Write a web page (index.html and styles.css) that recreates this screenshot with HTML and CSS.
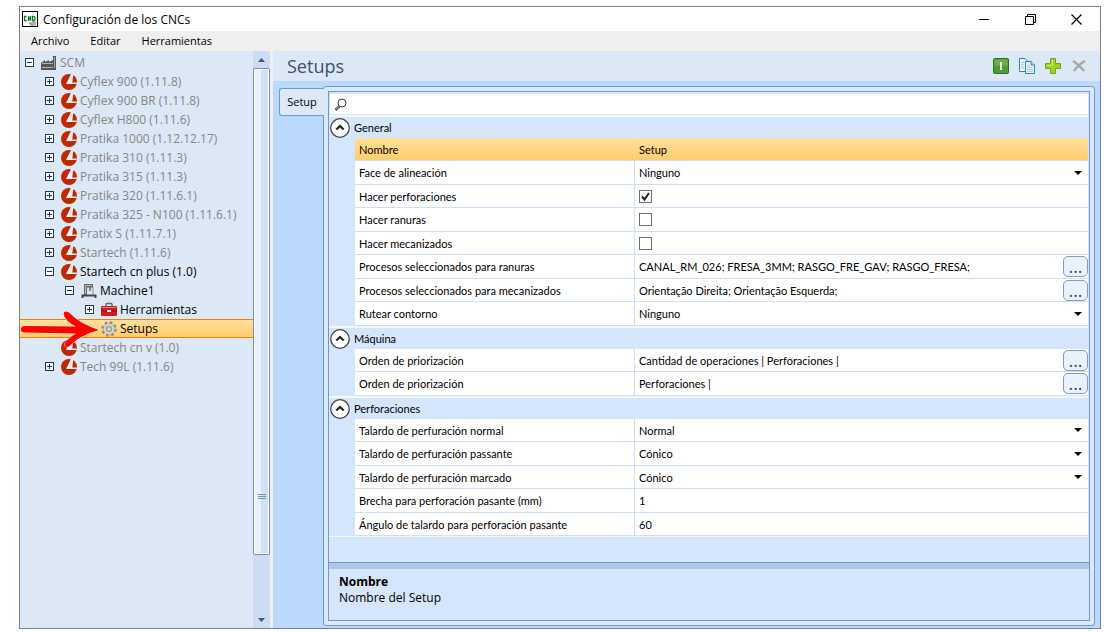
FILE: index.html
```html
<!DOCTYPE html>
<html lang="es">
<head>
    <meta charset="UTF-8">
    <meta name="viewport" content="width=device-width, initial-scale=1.0">
    <title>Configuración de los CNCs</title>
    <link rel="stylesheet" href="styles.css">
</head>
<body>
    <!-- shared icons -->
    <svg class="sprite" aria-hidden="true">
        <symbol id="brand" viewBox="0 0 16 16">
            <circle cx="8" cy="8" r="8" fill="#bd2a00"/>
            <path d="M10 0 L5 10 H15.700 L15.900 8.600 H11.300 L12.300 0 Z" fill="#e9eff8"/>
        </symbol>
        <symbol id="up" viewBox="0 0 19 19">
            <circle cx="9.5" cy="9.5" r="8.8" fill="#fff" stroke="#444" stroke-width="1.2"/>
            <path d="M6 11 L9.5 7.5 L13 11" fill="none" stroke="#222" stroke-width="2"/>
        </symbol>
    </svg>

    <div class="window">
        <header class="titlebar">
            <svg class="app-icon" width="16" height="16" viewBox="0 0 16 16">
                <rect x=".5" y=".5" width="15" height="15" fill="#fff" stroke="#000"/>
                <path d="M4.500 5.500 H2.500 V9.500 H4.500 M6.500 10 V5.500 L8.500 9.500 V5 M10.500 5.500 H12 L13 6.500 V8.500 L12 9.500 H10.500 Z" fill="none" stroke="#0b7a1d" stroke-width="1.3"/>
                <path d="M7 12 h2 v2 h2 v-3 h2 v3 h1" fill="none" stroke="#999" stroke-width="1.5"/>
            </svg>
            <h1>Configuración de los CNCs</h1>
            <div class="window-buttons">
                <button aria-label="Minimizar"><svg width="11" height="11"><path d="M0 5.5 H10" stroke="#000"/></svg></button>
                <button aria-label="Restaurar"><svg width="11" height="11"><path d="M.5 2.5 H8.5 V10.5 H.5 Z M2.5 2.5 V.5 H10.5 V8.5 H8.5" fill="none" stroke="#000"/></svg></button>
                <button aria-label="Cerrar"><svg width="11" height="11"><path d="M.5 .5 L10.5 10.5 M10.5 .5 L.5 10.5" stroke="#000" stroke-width="1.2"/></svg></button>
            </div>
        </header>

        <nav class="menubar">
            <button>Archivo</button>
            <button>Editar</button>
            <button>Herramientas</button>
        </nav>

        <div class="content">
            <aside class="sidebar">
                <ul class="tree">
                    <li class="node level-0"><button class="toggle open" aria-label="Contraer"></button>
                        <svg class="icon" viewBox="0 0 16 16"><path d="M0 8 L4 5 V7 L8 5 V7 L12 5 V1 H15 V15 H0 Z" fill="#555"/><path d="M1 8.500 H12 M1 12.500 H12" stroke="#b5b5b5"/><path d="M13.500 2 V13" stroke="#aaa"/></svg>SCM</li>
                    <li class="node level-1"><button class="toggle" aria-label="Expandir"></button><svg class="icon"><use href="#brand"/></svg>Cyflex 900 (1.11.8)</li>
                    <li class="node level-1"><button class="toggle" aria-label="Expandir"></button><svg class="icon"><use href="#brand"/></svg>Cyflex 900 BR (1.11.8)</li>
                    <li class="node level-1"><button class="toggle" aria-label="Expandir"></button><svg class="icon"><use href="#brand"/></svg>Cyflex H800 (1.11.6)</li>
                    <li class="node level-1"><button class="toggle" aria-label="Expandir"></button><svg class="icon"><use href="#brand"/></svg>Pratika 1000 (1.12.12.17)</li>
                    <li class="node level-1"><button class="toggle" aria-label="Expandir"></button><svg class="icon"><use href="#brand"/></svg>Pratika 310 (1.11.3)</li>
                    <li class="node level-1"><button class="toggle" aria-label="Expandir"></button><svg class="icon"><use href="#brand"/></svg>Pratika 315 (1.11.3)</li>
                    <li class="node level-1"><button class="toggle" aria-label="Expandir"></button><svg class="icon"><use href="#brand"/></svg>Pratika 320 (1.11.6.1)</li>
                    <li class="node level-1"><button class="toggle" aria-label="Expandir"></button><svg class="icon"><use href="#brand"/></svg>Pratika 325 - N100 (1.11.6.1)</li>
                    <li class="node level-1"><button class="toggle" aria-label="Expandir"></button><svg class="icon"><use href="#brand"/></svg>Pratix S (1.11.7.1)</li>
                    <li class="node level-1"><button class="toggle" aria-label="Expandir"></button><svg class="icon"><use href="#brand"/></svg>Startech (1.11.6)</li>
                    <li class="node level-1 active"><button class="toggle open" aria-label="Contraer"></button><svg class="icon"><use href="#brand"/></svg>Startech cn plus (1.0)</li>
                    <li class="node level-2 active"><button class="toggle open" aria-label="Contraer"></button>
                        <svg class="icon" viewBox="0 0 16 16"><path d="M3 1 H12 V4.500 H6 V12 H3 Z" fill="#666"/><path d="M4.500 11 V2.500 H11" fill="none" stroke="#bbb"/><path d="M9 4 V8" stroke="#666" stroke-width="1.500"/><path d="M12 4 V12" stroke="#888"/><path d="M1.500 15 V12.500 H14.500 V15" fill="none" stroke="#444" stroke-width="2"/></svg>Machine1</li>
                    <li class="node level-3 active"><button class="toggle" aria-label="Expandir"></button>
                        <svg class="icon" viewBox="0 0 16 16"><path d="M5 4.5 V2.5 Q5 1.5 6 1.5 H10 Q11 1.5 11 2.5 V4.5" fill="none" stroke="#666" stroke-width="1.4"/><rect x="0" y="4" width="16" height="10" rx="1" fill="#c91f1f"/><path d="M1 5.5 H15" stroke="#ee7c70"/><path d="M0 9 H16" stroke="#8c1010"/><rect x="6" y="8" width="4" height="2" fill="#eee"/></svg>Herramientas</li>
                    <li class="node level-3 active selected"><span class="toggle-space"></span>
                        <svg class="icon" viewBox="0 0 16 16"><g fill="none" stroke="#8a8a8a"><circle cx="8" cy="8" r="6.5" stroke-width="2.5" stroke-dasharray="2.6 2.500"/><circle cx="8" cy="8" r="4" stroke-width="3.6" stroke="#999"/><circle cx="8" cy="8" r="4.2" stroke-width="2.4" stroke="#d2d2d2"/><circle cx="8" cy="8" r="2.3" fill="#fbd58a" stroke-width=".8"/></g></svg>Setups
                        <svg class="pointer" width="80" height="38" viewBox="0 0 80 38"><path d="M3 16 Q0 17.500 1 21 L3 22.500 L56 23.500 Q48 28 44.500 34 Q45 38 49 36.500 Q60 25 79 20 Q60 14 49 2.500 Q44 0 43.500 4 Q45 11 56 16.500 Z" fill="#fe0000" stroke="#fff" stroke-width="1" paint-order="stroke"/></svg></li>
                    <li class="node level-1"><span class="toggle-space"></span><svg class="icon"><use href="#brand"/></svg>Startech cn v (1.0)</li>
                    <li class="node level-1"><button class="toggle" aria-label="Expandir"></button><svg class="icon"><use href="#brand"/></svg>Tech 99L (1.11.6)</li>
                </ul>
                <div class="scrollbar">
                    <button aria-label="Subir"><svg width="7" height="4"><path d="M0 4 L3.500 0 L7 4 Z" fill="#46566f"/></svg></button>
                    <div class="thumb"><svg width="8" height="6"><path d="M0 .5 H8 M0 2.500 H8 M0 4.500 H8" stroke="#6d95cc"/></svg></div>
                    <button aria-label="Bajar"><svg width="7" height="4"><path d="M0 0 L3.500 4 L7 0 Z" fill="#46566f"/></svg></button>
                </div>
            </aside>

            <main class="main">
                <div class="page-header">
                    <h2>Setups</h2>
                    <div class="tools">
                        <button aria-label="Activar"><svg width="16" height="16"><rect x=".5" y=".5" width="15" height="15" rx="1" fill="#4b9f2f" stroke="#26722b"/><rect x="1.500" y="1.500" width="13" height="6" fill="#6ab43e"/><path d="M8 4 V12" stroke="#fff" stroke-width="2"/></svg></button>
                        <button aria-label="Copiar"><svg width="16" height="16"><g fill="#eef6fc" stroke="#2583bd"><path d="M.5 .5 H6 L9.500 4 V13.500 H.5 Z"/><path d="M6.500 3.500 H12 L15.500 7 V15.500 H6.500 Z"/><path d="M12 3.500 V7 H15.500" fill="#bcdcf2"/></g><path d="M2 4.500 H5 M2 6.500 H5 M2 8.500 H5 M2 10.500 H5 M8 7.500 H11 M8 9.500 H14 M8 11.500 H14 M8 13.500 H14" stroke="#a9cbe3"/></svg></button>
                        <button aria-label="Agregar"><svg width="16" height="16"><path d="M5.500 .5 H10.500 V5.500 H15.500 V10.500 H10.500 V15.500 H5.500 V10.500 H.5 V5.500 H5.500 Z" fill="#9ed321" stroke="#6ea616"/><path d="M7.500 2 V7.500 H2" fill="none" stroke="#d0ef71"/></svg></button>
                        <button aria-label="Eliminar" disabled><svg width="16" height="16"><path d="M2 3 Q7 6 13 13 M14 3 Q8 6 3 13" fill="none" stroke="#a5a5a5" stroke-width="2.200"/></svg></button>
                    </div>
                </div>

                <div class="workspace">
                    <button class="tab">Setup</button>
                    <div class="panel">
                        <div class="inner">
                            <div class="search">
                                <svg width="13" height="13"><path d="M6 7.500 L1.500 12" stroke="#555" stroke-width="2.600"/><circle cx="8" cy="5" r="4" fill="#f4f8fd" stroke="#444"/><path d="M5 8 L2 11" stroke="#d5a05a"/></svg>
                                <input type="search" aria-label="Buscar">
                            </div>

                            <table class="grid">
                                <colgroup>
                                    <col class="col-gutter">
                                    <col class="col-name">
                                    <col>
                                </colgroup>
                                <tbody>
                                    <tr class="category"><th colspan="3"><div><button aria-label="Contraer General"><svg><use href="#up"/></svg></button>General</div></th></tr>
                                    <tr class="current"><td class="gutter"></td><th><label for="nombre">Nombre</label></th><td><input type="text" id="nombre" value="Setup"></td></tr>
                                    <tr><td class="gutter"></td><th><label for="face">Face de alineación</label></th><td><select id="face"><option>Ninguno</option></select></td></tr>
                                    <tr><td class="gutter"></td><th><label for="perforaciones">Hacer perforaciones</label></th><td><input type="checkbox" id="perforaciones" checked></td></tr>
                                    <tr><td class="gutter"></td><th><label for="ranuras">Hacer ranuras</label></th><td><input type="checkbox" id="ranuras"></td></tr>
                                    <tr><td class="gutter"></td><th><label for="mecanizados">Hacer mecanizados</label></th><td><input type="checkbox" id="mecanizados"></td></tr>
                                    <tr><td class="gutter"></td><th><label for="proc-ranuras">Procesos seleccionados para ranuras</label></th><td><div class="picker">CANAL_RM_026; FRESA_3MM; RASGO_FRE_GAV; RASGO_FRESA;<button id="proc-ranuras">...</button></div></td></tr>
                                    <tr><td class="gutter"></td><th><label for="proc-mecanizados">Procesos seleccionados para mecanizados</label></th><td><div class="picker">Orientação Direita; Orientação Esquerda;<button id="proc-mecanizados">...</button></div></td></tr>
                                    <tr><td class="gutter"></td><th><label for="contorno">Rutear contorno</label></th><td><select id="contorno"><option>Ninguno</option></select></td></tr>
                                </tbody>
                                <tbody>
                                    <tr class="category"><th colspan="3"><div><button aria-label="Contraer Máquina"><svg><use href="#up"/></svg></button>Máquina</div></th></tr>
                                    <tr><td class="gutter"></td><th><label for="orden-1">Orden de priorización</label></th><td><div class="picker">Cantidad de operaciones | Perforaciones |<button id="orden-1">...</button></div></td></tr>
                                    <tr><td class="gutter"></td><th><label for="orden-2">Orden de priorización</label></th><td><div class="picker">Perforaciones |<button id="orden-2">...</button></div></td></tr>
                                </tbody>
                                <tbody>
                                    <tr class="category"><th colspan="3"><div><button aria-label="Contraer Perforaciones"><svg><use href="#up"/></svg></button>Perforaciones</div></th></tr>
                                    <tr><td class="gutter"></td><th><label for="normal">Talardo de perfuración normal</label></th><td><select id="normal"><option>Normal</option></select></td></tr>
                                    <tr><td class="gutter"></td><th><label for="passante">Talardo de perfuración passante</label></th><td><select id="passante"><option>Cónico</option></select></td></tr>
                                    <tr><td class="gutter"></td><th><label for="marcado">Talardo de perfuración marcado</label></th><td><select id="marcado"><option>Cónico</option></select></td></tr>
                                    <tr><td class="gutter"></td><th><label for="brecha">Brecha para perforación pasante (mm)</label></th><td><input type="text" id="brecha" value="1"></td></tr>
                                    <tr><td class="gutter"></td><th><label for="angulo">Ángulo de talardo para perforación pasante</label></th><td><input type="text" id="angulo" value="60"></td></tr>
                                </tbody>
                            </table>

                            <div class="description">
                                <h3>Nombre</h3>
                                <p>Nombre del Setup</p>
                            </div>
                        </div>
                    </div>
                </div>
            </main>
        </div>
    </div>
</body>
</html>
```

FILE: styles.css
```css
* {
    box-sizing: border-box;
}
body {
    display: flex;
    min-height: 100vh;
    margin: 0;
    padding: 6px 4px 3px 19px;
    background: #fff;
    color: #000;
    font-family: "Open Sans", "Noto Sans", sans-serif;
    font-size: 11px;
}
h1, h2, h3, p, ul {
    margin: 0;
    padding: 0;
    font-weight: normal;
}
button, input, select {
    margin: 0;
    padding: 0;
    border: none;
    background: none;
    color: inherit;
    font: inherit;
}
svg {
    display: block;
    flex: none;
}
.sprite {
    position: absolute;
    width: 0;
    height: 0;
}
.window {
    display: flex;
    flex-direction: column;
    flex: 1;
    border: 1px solid #808080;
}

/* title and menu */
.titlebar {
    display: flex;
    align-items: center;
    height: 24px;
    padding: 0 1px 0 2px;
}
.titlebar h1 {
    flex: 1;
    padding-left: 5px;
    font-size: 12px;
}
.window-buttons button {
    width: 46px;
}
.window-buttons {
    display: flex;
}
.window-buttons svg {
    margin: auto;
}
.menubar {
    display: flex;
    gap: 21px;
    height: 20px;
    padding: 0 0 2px 11px;
    background: #efefef;
}
.content {
    display: flex;
    flex: 1;
}

/* tree */
.sidebar {
    display: flex;
    width: 253px;
    border-right: 3px solid #efefef;
    background: #dde8f6;
}
.tree {
    flex: 1;
    padding-top: 2px;
    list-style: none;
    color: #858585;
    font-size: 12px;
}
.node {
    position: relative;
    display: flex;
    align-items: center;
    height: 19px;
    padding-left: 5px;
    white-space: nowrap;
}
.level-1 {
    padding-left: 25px;
}
.level-2 {
    padding-left: 45px;
}
.level-3 {
    padding-left: 65px;
}
.active {
    color: #000;
}
.selected {
    border: solid #f57b10;
    border-width: 1px 0;
    background: linear-gradient(#ffdf9b, #ffcd69);
}
.toggle {
    width: 9px;
    height: 9px;
    border: 1px solid #1f3864;
    background: linear-gradient(#1f3864, #1f3864) center / 5px 1px no-repeat, linear-gradient(#1f3864, #1f3864) center / 1px 5px no-repeat, #fff;
}
.toggle.open {
    background: linear-gradient(#1f3864, #1f3864) center / 5px 1px no-repeat, #fff;
}
.toggle-space {
    width: 9px;
}
.icon {
    width: 16px;
    height: 16px;
    margin: 0 3px 0 7px;
}
.pointer {
    position: absolute;
    left: 0;
    top: -10px;
    z-index: 1;
}
.scrollbar {
    display: flex;
    flex-direction: column;
    width: 17px;
    background: #cddcf2;
}
.scrollbar button {
    height: 17px;
}
.scrollbar button svg,
.thumb svg {
    margin: auto;
}
.thumb {
    display: flex;
    flex: 1;
    margin-bottom: 56px;
    border: 1px solid #6f8fc4;
    border-radius: 2px;
    background: linear-gradient(90deg, #eaf1fd 45%, #d3e1f5 45%);
    box-shadow: inset 0 0 0 1px #fff;
}
.thumb svg {
    margin: auto auto 54px;
}

/* right side */
.main {
    display: flex;
    flex-direction: column;
    flex: 1;
    background: #bbd8fd;
}
.page-header {
    display: flex;
    align-items: center;
    justify-content: space-between;
    height: 30px;
    padding: 0 13px 0 14px;
    background: #dde8f6;
    color: #3c5068;
}
.page-header h2 {
    font-size: 18px;
}
.tools {
    display: flex;
    gap: 10px;
}
.workspace {
    display: flex;
    align-items: flex-start;
    flex: 1;
    padding: 5px 5px 2px 6px;
}
.tab {
    position: relative;
    z-index: 1;
    width: 45px;
    height: 28px;
    margin: 2px -1px 0 0;
    padding-bottom: 2px;
    border: 1px solid #6f98d6;
    border-right: none;
    border-radius: 3px 0 0 3px;
    background: #dde8f6;
}
.panel {
    display: flex;
    flex: 1;
    align-self: stretch;
    padding: 4px;
    border: 1px solid #6f98d6;
    border-radius: 3px;
    background: #dde8f6;
}
.inner {
    display: flex;
    flex-direction: column;
    flex: 1;
    border: 1px solid #6f98d6;
    background: #d4e5fc;
}
.search {
    display: flex;
    align-items: center;
    height: 20px;
    margin: 2px 1px 1px;
    padding-left: 4px;
    background: #fff;
}
.search input {
    flex: 1;
    padding-left: 4px;
    outline: none;
}

/* property grid */
.grid {
    width: calc(100% - 1px);
    border-collapse: separate;
    border-spacing: 0;
    border-bottom: 1px solid #f3f8ff;
    table-layout: fixed;
    font-family: Lato, "Open Sans", sans-serif;
}
.col-gutter {
    width: 26px;
}
.col-name {
    width: 280px;
}
.grid tr {
    height: 24px;
}
.grid tr:nth-child(even),
.grid .category {
    height: 23px;
}
.grid td,
.grid th {
    padding: 0 0 0 4px;
    border-bottom: 1px solid #cfe0f6;
    background: #fff;
    text-align: left;
    font-weight: normal;
    white-space: nowrap;
}
.grid th {
    border-right: 1px solid #cfe0f6;
}
.grid .gutter {
    padding: 0;
    border: none;
    background: #d4e5fc;
}
.grid .category th {
    padding-left: 1px;
    border: none;
    border-top: 2px solid #f3f8ff;
    background: #d4e5fc;
}
.category div {
    display: flex;
    align-items: center;
    gap: 4px;
    height: 20px;
}
.category button,
.category svg {
    width: 20px;
    height: 20px;
}
.grid .current th,
.grid .current td:not(.gutter) {
    border-right-color: #ffd88a;
    background: linear-gradient(#ffdf9b, #ffcd69);
}
.grid label,
.grid input,
.grid select {
    display: block;
}
.grid input[type="text"],
.grid select {
    width: 100%;
    height: 20px;
    outline: none;
}
.grid select {
    appearance: none;
    background: url("data:image/svg+xml,%3Csvg xmlns='http://www.w3.org/2000/svg' width='8' height='4'%3E%3Cpath d='M0 0H8L4 4Z'/%3E%3C/svg%3E") right 6px center no-repeat;
}
.grid input[type="checkbox"] {
    appearance: none;
    width: 13px;
    height: 13px;
    border: 1px solid #707070;
    background: #fff;
}
.grid input[type="checkbox"]:checked {
    background: url("data:image/svg+xml,%3Csvg xmlns='http://www.w3.org/2000/svg' width='11' height='11'%3E%3Cpath d='M2 5.500L4.500 8.500L9 2' fill='none' stroke='%23222' stroke-width='2'/%3E%3C/svg%3E");
}
.picker {
    display: flex;
    align-items: center;
    justify-content: space-between;
    height: 22px;
}
.picker button {
    width: 25px;
    height: 21px;
    border: 1px solid #7f9dc6;
    border-radius: 5px;
    background: #e9f1fc;
    color: #3b4a63;
    font-family: "Open Sans", sans-serif;
    font-size: 18px;
    line-height: 15px;
}

.description {
    height: 57px;
    margin-top: auto;
    padding: 5px 10px;
    border-top: 6px solid #b0c6e8;
    box-shadow: 0 -1px #6f98d6;
    font-size: 12px;
    line-height: 16px;
}
.description h3 {
    font-size: 12px;
    font-weight: bold;
}
```
